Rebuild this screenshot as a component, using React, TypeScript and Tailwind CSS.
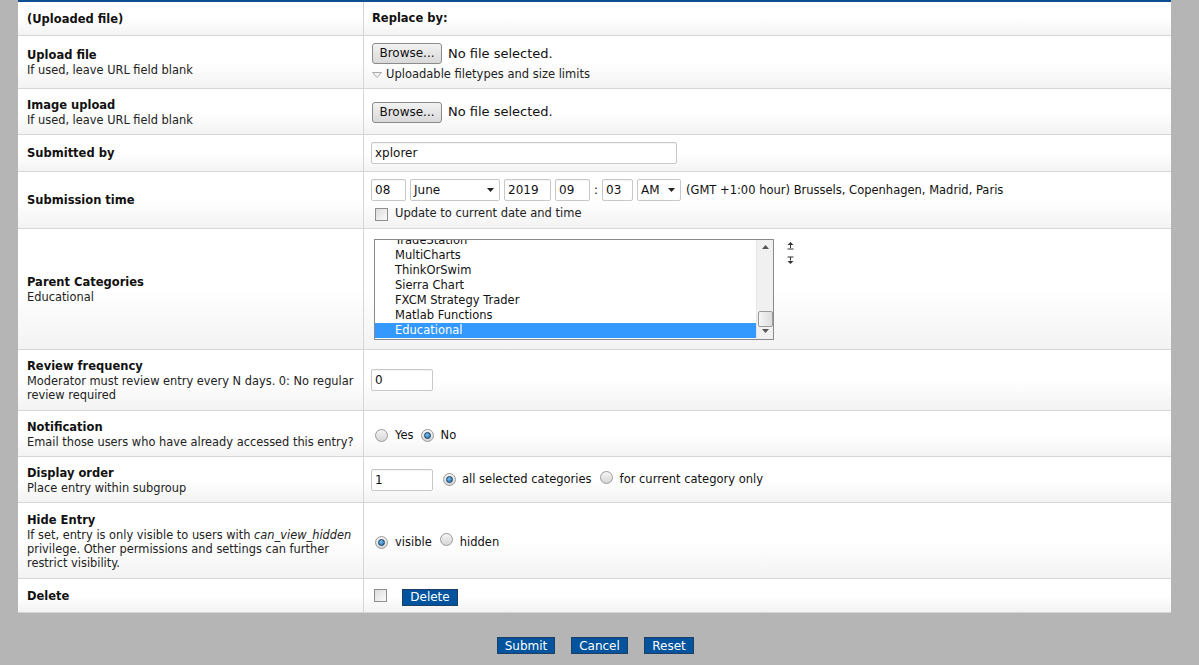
import React from "react";

const font = "font-['DejaVu_Sans','Verdana',sans-serif]";

const Cell: React.FC<{ className?: string; children?: React.ReactNode }> = ({
  className = "",
  children,
}) => (
  <div
    className={`flex flex-col justify-center border-b border-[#d6d6d6] bg-gradient-to-b from-white from-50% to-[#f3f3f3] ${className}`}
  >
    {children}
  </div>
);

const Radio: React.FC<{ checked?: boolean }> = ({ checked }) => (
  <span className="inline-flex h-[13px] w-[13px] items-center justify-center rounded-full border border-[#9a9a9a] bg-gradient-to-b from-[#f4f4f4] to-[#d6d6d6]">
    {checked && (
      <span className="h-[7px] w-[7px] rounded-full border border-[#1b3f63] bg-[radial-gradient(circle_at_40%_35%,#7cc2ee,#1565a8)]" />
    )}
  </span>
);

const Checkbox: React.FC = () => (
  <span className="inline-block h-[13px] w-[13px] border border-[#8e8e8e] bg-gradient-to-br from-[#dcdcdc] to-[#fbfbfb]" />
);

const TextInput: React.FC<{ value: string; w: string }> = ({ value, w }) => (
  <div
    className={`flex h-[22px] items-center rounded-[2px] border border-[#c8c8c8] bg-white pl-[3px] text-[12px] text-[#111] shadow-[inset_0_1px_1px_rgba(0,0,0,0.05)] ${w}`}
  >
    {value}
  </div>
);

const Select: React.FC<{ value: string; w: string }> = ({ value, w }) => (
  <div
    className={`flex h-[22px] items-center justify-between rounded-[2px] border border-[#c8c8c8] bg-white pl-[3px] pr-[5px] text-[12px] text-[#111] ${w}`}
  >
    <span>{value}</span>
    <svg width="7" height="4" viewBox="0 0 7 4">
      <path d="M0 0h7L3.5 4z" fill="#222" />
    </svg>
  </div>
);

const BrowseBtn: React.FC = () => (
  <div className="flex h-[21px] w-[70px] items-center justify-center rounded-[3px] border border-[#8b8b8b] bg-gradient-to-b from-[#f2f2f2] to-[#d9d9d9] text-[12px] text-[#111]">
    Browse...
  </div>
);

const BlueBtn: React.FC<{ label: string; w: string }> = ({ label, w }) => (
  <button
    className={`flex h-[17px] items-center justify-center border border-[#1d3f66] bg-[#00539c] text-[12px] text-white ${w}`}
  >
    {label}
  </button>
);

const Label: React.FC<{ title: string; children?: React.ReactNode }> = ({
  title,
  children,
}) => (
  <div className="pl-[9px] pr-[1px]">
    <div className="text-[11.5px] font-bold leading-[16px] text-[#111]">
      {title}
    </div>
    {children && (
      <div className="text-[11.4px] leading-[14px] text-[#222]">{children}</div>
    )}
  </div>
);

const categories = [
  "TradeStation",
  "MultiCharts",
  "ThinkOrSwim",
  "Sierra Chart",
  "FXCM Strategy Trader",
  "Matlab Functions",
  "Educational",
];

export default function App() {
  return (
    <div className={`${font} h-[665px] w-full overflow-hidden bg-[#b5b5b5]`}>
      <div className="ml-[18px] w-[1153px] border-t-2 border-[#0e4f93] bg-white">
        <div className="grid grid-cols-[346px_1fr]">
          {/* header */}
          <Cell className="h-[34px] border-r border-r-[#d6d6d6]">
            <Label title="(Uploaded file)" />
          </Cell>
          <Cell className="h-[34px] pl-[8px]">
            <div className="text-[11.5px] font-bold text-[#111]">Replace by:</div>
          </Cell>

          {/* upload */}
          <Cell className="h-[53px] border-r border-r-[#d6d6d6]">
            <Label title="Upload file">If used, leave URL field blank</Label>
          </Cell>
          <Cell className="h-[53px] pl-[8px]">
            <div className="mt-[2px] flex items-center gap-[6px]">
              <BrowseBtn />
              <span className="text-[13px] text-[#111]">No file selected.</span>
            </div>
            <div className="mt-[2px] flex items-center gap-[4px] text-[11.5px] text-[#222]">
              <svg width="10" height="6" viewBox="0 0 10 6">
                <path d="M0.5 0.5h9L5 5.5z" fill="#f4f4f4" stroke="#aaa" />
              </svg>
              Uploadable filetypes and size limits
            </div>
          </Cell>

          {/* image */}
          <Cell className="h-[46px] border-r border-r-[#d6d6d6]">
            <Label title="Image upload">If used, leave URL field blank</Label>
          </Cell>
          <Cell className="h-[46px] pl-[8px]">
            <div className="mt-[1px] flex items-center gap-[6px]">
              <BrowseBtn />
              <span className="text-[13px] text-[#111]">No file selected.</span>
            </div>
          </Cell>

          {/* submitted by */}
          <Cell className="h-[37px] border-r border-r-[#d6d6d6]">
            <Label title="Submitted by" />
          </Cell>
          <Cell className="h-[37px] pl-[7px]">
            <TextInput value="xplorer" w="w-[306px]" />
          </Cell>

          {/* submission time */}
          <Cell className="h-[57px] border-r border-r-[#d6d6d6]">
            <Label title="Submission time" />
          </Cell>
          <Cell className="h-[57px] pl-[7px]">
            <div className="mt-[2px] flex items-center gap-[4px] text-[11.5px] text-[#111]">
              <TextInput value="08" w="w-[35px]" />
              <Select value="June" w="w-[90px]" />
              <TextInput value="2019" w="w-[47px]" />
              <TextInput value="09" w="w-[35px]" />
              <span className="text-[12px]">:</span>
              <TextInput value="03" w="w-[31px]" />
              <Select value="AM" w="w-[44px]" />
              <span className="ml-[1px]">
                (GMT +1:00 hour) Brussels, Copenhagen, Madrid, Paris
              </span>
            </div>
            <div className="mt-[4px] flex items-center gap-[7px] pl-[4px] text-[11.5px] text-[#222]">
              <Checkbox />
              Update to current date and time
            </div>
          </Cell>

          {/* parent categories */}
          <Cell className="h-[121px] border-r border-r-[#d6d6d6]">
            <Label title="Parent Categories">Educational</Label>
          </Cell>
          <Cell className="h-[121px] pl-[10px]">
            <div className="flex items-start">
              <div className="flex h-[101px] w-[400px] border border-[#8a8a8a] bg-white">
                <div className="relative flex-1 overflow-hidden">
                  <div className="absolute left-0 right-0 top-[-7px]">
                    {categories.map((c) => (
                      <div
                        key={c}
                        className={`h-[15px] pl-[20px] text-[11.5px] leading-[15px] ${
                          c === "Educational"
                            ? "bg-[#3399ff] text-white"
                            : "text-[#111]"
                        }`}
                      >
                        {c}
                      </div>
                    ))}
                  </div>
                </div>
                <div className="flex w-[17px] flex-col items-center justify-between border-l border-[#e6e6e6] bg-[#f0f0f0] py-[5px]">
                  <svg width="7" height="4" viewBox="0 0 7 4">
                    <path d="M3.5 0L7 4H0z" fill="#555" />
                  </svg>
                  <div className="mt-auto mb-[2px] h-[16px] w-[15px] rounded-[2px] border border-[#9b9b9b] bg-gradient-to-r from-[#f6f6f6] to-[#dcdcdc]" />
                  <svg width="7" height="4" viewBox="0 0 7 4" className="mb-[1px]">
                    <path d="M0 0h7L3.5 4z" fill="#555" />
                  </svg>
                </div>
              </div>
              <div className="ml-[13px] mt-[3px] flex flex-col gap-[6px]">
                <svg width="7" height="8" viewBox="0 0 7 8">
                  <path d="M3.5 0L6.5 3H0.5z" fill="#333" />
                  <path d="M3 3h1v3H3zM0.5 6.5h6v1h-6z" fill="#333" />
                </svg>
                <svg width="7" height="8" viewBox="0 0 7 8">
                  <path d="M0.5 0.5h6v1h-6zM3 1.5h1v3H3z" fill="#333" />
                  <path d="M0.5 5H6.5L3.5 8z" fill="#333" />
                </svg>
              </div>
            </div>
          </Cell>

          {/* review frequency */}
          <Cell className="h-[61px] border-r border-r-[#d6d6d6]">
            <Label title="Review frequency">
              Moderator must review entry every N days. 0: No regular review
              required
            </Label>
          </Cell>
          <Cell className="h-[61px] pl-[7px]">
            <TextInput value="0" w="w-[62px]" />
          </Cell>

          {/* notification */}
          <Cell className="h-[46px] border-r border-r-[#d6d6d6]">
            <Label title="Notification">
              Email those users who have already accessed this entry?
            </Label>
          </Cell>
          <Cell className="h-[46px] pl-[11px]">
            <div className="mt-[4px] flex items-center text-[11.5px] text-[#111]">
              <Radio />
              <span className="ml-[7px]">Yes</span>
              <span className="ml-[7px]">
                <Radio checked />
              </span>
              <span className="ml-[7px]">No</span>
            </div>
          </Cell>

          {/* display order */}
          <Cell className="h-[46px] border-r border-r-[#d6d6d6]">
            <Label title="Display order">Place entry within subgroup</Label>
          </Cell>
          <Cell className="h-[46px] pl-[7px]">
            <div className="mt-[1px] flex items-center text-[11.5px] text-[#111]">
              <TextInput value="1" w="w-[62px]" />
              <span className="ml-[10px]">
                <Radio checked />
              </span>
              <span className="ml-[6px]">all selected categories</span>
              <span className="ml-[8px]">
                <Radio />
              </span>
              <span className="ml-[7px]">for current category only</span>
            </div>
          </Cell>

          {/* hide entry */}
          <Cell className="h-[76px] border-r border-r-[#d6d6d6]">
            <Label title="Hide Entry">
              If set, entry is only visible to users with{" "}
              <i>can_view_hidden</i> privilege. Other permissions and settings
              can further restrict visibility.
            </Label>
          </Cell>
          <Cell className="h-[76px] pl-[11px]">
            <div className="mt-[4px] flex items-center text-[11.5px] text-[#111]">
              <Radio checked />
              <span className="ml-[7px]">visible</span>
              <span className="ml-[8px]">
                <Radio />
              </span>
              <span className="ml-[7px]">hidden</span>
            </div>
          </Cell>

          {/* delete */}
          <Cell className="h-[34px] border-r border-r-[#d6d6d6]">
            <Label title="Delete" />
          </Cell>
          <Cell className="h-[34px] pl-[10px]">
            <div className="flex items-center">
              <Checkbox />
              <span className="ml-[15px] mt-[3px]">
                <BlueBtn label="Delete" w="w-[56px]" />
              </span>
            </div>
          </Cell>
        </div>
      </div>

      <div className="mt-[24px] flex justify-center gap-[16px] pr-[8px]">
        <BlueBtn label="Submit" w="w-[58px]" />
        <BlueBtn label="Cancel" w="w-[57px]" />
        <BlueBtn label="Reset" w="w-[50px]" />
      </div>
    </div>
  );
}
